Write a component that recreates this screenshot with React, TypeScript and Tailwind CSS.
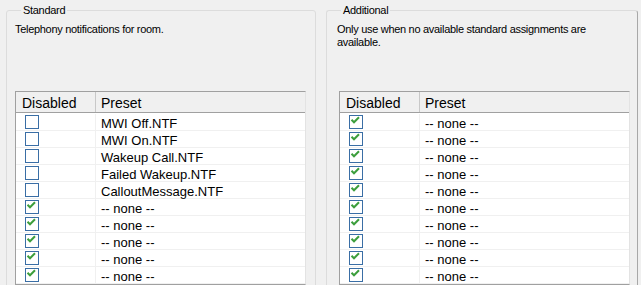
import React from "react";

const LEFT_ROWS = [
  { checked: false, name: "MWI Off.NTF" },
  { checked: false, name: "MWI On.NTF" },
  { checked: false, name: "Wakeup Call.NTF" },
  { checked: false, name: "Failed Wakeup.NTF" },
  { checked: false, name: "CalloutMessage.NTF" },
  { checked: true, name: "-- none --" },
  { checked: true, name: "-- none --" },
  { checked: true, name: "-- none --" },
  { checked: true, name: "-- none --" },
  { checked: true, name: "-- none --" },
];

const RIGHT_ROWS = Array.from({ length: 10 }, () => ({ checked: true, name: "-- none --" }));

function CheckBox({ checked }: { checked: boolean }) {
  return (
    <div className="w-[14px] h-[14px] border border-[#3a6ea5] bg-white">
      {checked && (
        <svg width="12" height="12" viewBox="0 0 12 12" className="block">
          <path d="M1.5 3.8 L4 6.3 L9 1.2" fill="none" stroke="#3c9e3c" strokeWidth="2" />
        </svg>
      )}
    </div>
  );
}

function Grid({ rows }: { rows: { checked: boolean; name: string }[] }) {
  return (
    <div className="w-[291px] border border-[#a0a0a0] border-r-[#e3e3e3] bg-white">
      {/* header */}
      <div className="flex h-[21px] bg-[#f0f0f0] border-b border-[#a0a0a0] text-[14px] leading-[18px]">
        <div className="w-[80px] pl-[6px] pt-[2px] border-r border-[#c8c8c8]">Disabled</div>
        <div className="flex-1 pl-[5px] pt-[2px]">Preset</div>
      </div>
      <div className="h-[1px]" />
      {rows.map((r, i) => (
        <div key={i} className="flex h-[17px] border-b border-[#f0f0f0] text-[13px] leading-[16px]">
          <div className="w-[80px] pl-[9px] pt-[1px] border-r border-[#f0f0f0]">
            <CheckBox checked={r.checked} />
          </div>
          <div className="flex-1 pl-[5px] pt-[2px] whitespace-nowrap">{r.name}</div>
        </div>
      ))}
    </div>
  );
}

export default function App() {
  return (
    <div className="w-[641px] h-[285px] overflow-hidden bg-[#f0f0f0] flex items-start text-black font-['Liberation_Sans',Arial,sans-serif]">
      {/* Standard */}
      <fieldset className="ml-[6px] mt-[3px] w-[310px] h-[330px] border border-[#dcdcdc] rounded-[3px] pl-[8px]">
        <legend className="ml-[6px] px-[2px] text-[11px] leading-[14px] tracking-[-0.3px]">Standard</legend>
        <p className="mt-[6px] h-[68px] text-[11px] leading-[13px] tracking-[-0.3px]">
          Telephony notifications for room.
        </p>
        <Grid rows={LEFT_ROWS} />
      </fieldset>

      {/* Additional */}
      <fieldset className="ml-[10px] mt-[3px] w-[312px] h-[330px] border border-[#dcdcdc] border-r-[#a8a8a8] rounded-[3px] pl-[10px]">
        <legend className="ml-[4px] px-[2px] text-[11px] leading-[14px] tracking-[-0.3px]">Additional</legend>
        <p className="mt-[6px] h-[68px] pr-[20px] text-[11px] leading-[13px] tracking-[-0.3px]">
          Only use when no available standard assignments are available.
        </p>
        <div className="ml-[2px]">
          <Grid rows={RIGHT_ROWS} />
        </div>
      </fieldset>
    </div>
  );
}
